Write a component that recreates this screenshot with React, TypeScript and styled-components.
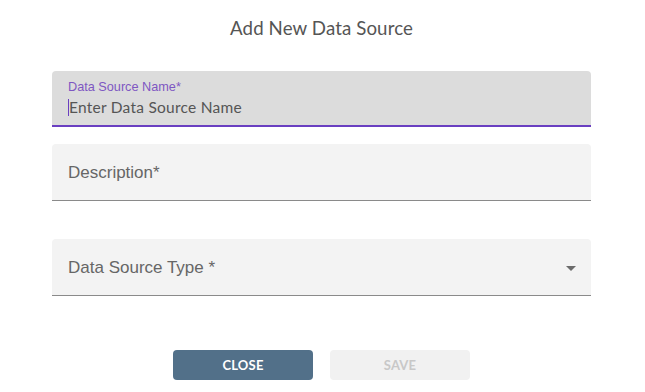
import React from "react";
import styled, { createGlobalStyle } from "styled-components";

const Global = createGlobalStyle`
  html, body { margin: 0; padding: 0; background: #fff; }
  body { width: 645px; height: 392px; overflow: hidden; }
`;

const Dialog = styled.div`
  width: 645px;
  height: 392px;
  box-sizing: border-box;
  display: flex;
  flex-direction: column;
  padding: 14px 54px 0 52px;
`;

const Title = styled.h2`
  margin: 0;
  height: 28px;
  text-align: center;
  font-family: "Lato", sans-serif;
  font-weight: 400;
  font-size: 18.7px;
  line-height: 28px;
  color: #555;
  letter-spacing: 0.1px;
`;

const Form = styled.div`
  display: flex;
  flex-direction: column;
  margin-top: 29px;
`;

const Field = styled.div<{ $focused?: boolean; $gap?: number }>`
  position: relative;
  height: ${(p) => (p.$focused ? 56 : 57)}px;
  box-sizing: border-box;
  background: ${(p) => (p.$focused ? "#dcdcdc" : "#f3f3f3")};
  border-top-left-radius: 4px;
  border-top-right-radius: 4px;
  border-bottom: ${(p) => (p.$focused ? "2px solid #6a3fc1" : "1px solid #8a8a8a")};
  margin-top: ${(p) => p.$gap ?? 0}px;
  display: flex;
  align-items: center;
  padding: 0 16px;
`;

const SmallLabel = styled.div`
  position: absolute;
  left: 16px;
  top: 9px;
  font-family: "Liberation Sans", Arial, sans-serif;
  font-size: 12.7px;
  line-height: 14px;
  color: #7e57c2;
`;

const InputText = styled.div`
  position: relative;
  margin-top: 17px;
  font-family: "Lato", sans-serif;
  font-size: 15.5px;
  color: #555;
  letter-spacing: 0.25px;
  padding-left: 1px;
`;

const Caret = styled.span`
  position: absolute;
  left: 0;
  top: 1px;
  width: 1px;
  height: 17px;
  background: #6a3fc1;
`;

const Placeholder = styled.div`
  flex: 1;
  font-family: "Liberation Sans", Arial, sans-serif;
  font-size: 17px;
  color: #666;
  margin-top: 1px;
`;

const Arrow = styled.svg`
  width: 10px;
  height: 5px;
  margin-right: -1px;
  margin-top: 2px;
`;

const Actions = styled.div`
  display: flex;
  justify-content: center;
  gap: 17px;
  margin-top: 54px;
`;

const Button = styled.button<{ $primary?: boolean }>`
  width: 140px;
  height: 30px;
  border: none;
  border-radius: 4px;
  font-family: "Lato", sans-serif;
  font-weight: 700;
  font-size: 13px;
  letter-spacing: 0.2px;
  background: ${(p) => (p.$primary ? "#527089" : "#f1f1f1")};
  color: ${(p) => (p.$primary ? "#fff" : "#c8c8c8")};
  cursor: ${(p) => (p.$primary ? "pointer" : "default")};
`;

export default function App() {
  return (
    <>
      <Global />
      <Dialog>
        <Title>Add New Data Source</Title>
        <Form>
          <Field $focused>
            <SmallLabel>Data Source Name*</SmallLabel>
            <InputText>
              <Caret />
              Enter Data Source Name
            </InputText>
          </Field>
          <Field $gap={17}>
            <Placeholder>Description*</Placeholder>
          </Field>
          <Field $gap={38}>
            <Placeholder>Data Source Type *</Placeholder>
            <Arrow viewBox="0 0 10 5">
              <path d="M0 0 L5 5 L10 0 Z" fill="#6b6b6b" />
            </Arrow>
          </Field>
        </Form>
        <Actions>
          <Button $primary>CLOSE</Button>
          <Button disabled>SAVE</Button>
        </Actions>
      </Dialog>
    </>
  );
}
